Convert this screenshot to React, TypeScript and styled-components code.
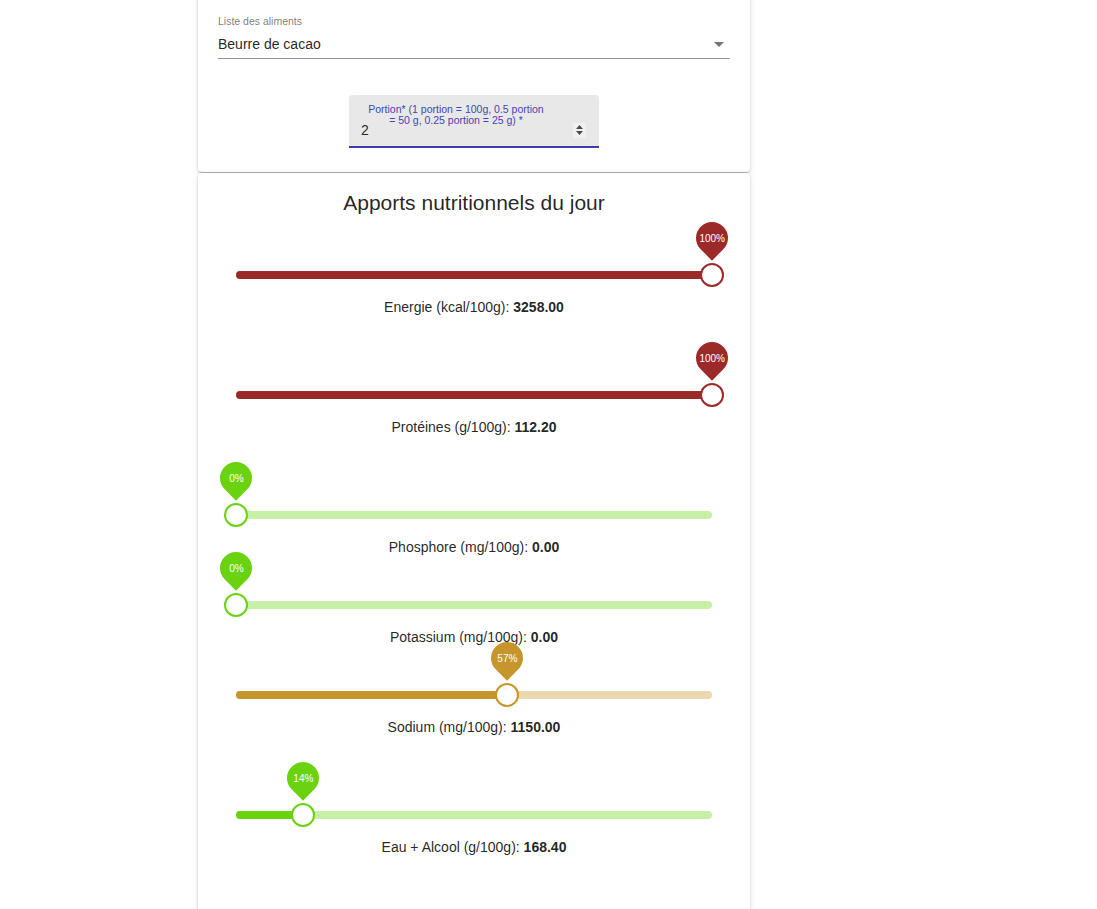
import React from 'react';
import styled, { createGlobalStyle } from 'styled-components';

const GlobalStyle = createGlobalStyle`
  body {
    margin: 0;
    background: #ffffff;
    font-family: "Liberation Sans", Arial, Helvetica, sans-serif;
    color: rgba(0, 0, 0, 0.87);
  }
`;

interface INutrient {
  label: string;
  value: string;
  percent: number;
  color: string;
  rail: string;
  space: number;
}

const RED = '#9b2a28';
const RED_RAIL = '#e1bfbe';
const GREEN = '#6ad20e';
const GREEN_RAIL = '#c7efa6';
const GOLD = '#c6952b';
const GOLD_RAIL = '#ebd8ae';

const nutrients: INutrient[] = [
  { label: 'Energie (kcal/100g)', value: '3258.00', percent: 100, color: RED, rail: RED_RAIL, space: 48 },
  { label: 'Protéines (g/100g)', value: '112.20', percent: 100, color: RED, rail: RED_RAIL, space: 68 },
  { label: 'Phosphore (mg/100g)', value: '0.00', percent: 0, color: GREEN, rail: GREEN_RAIL, space: 68 },
  { label: 'Potassium (mg/100g)', value: '0.00', percent: 0, color: GREEN, rail: GREEN_RAIL, space: 38 },
  { label: 'Sodium (mg/100g)', value: '1150.00', percent: 57, color: GOLD, rail: GOLD_RAIL, space: 38 },
  { label: 'Eau + Alcool (g/100g)', value: '168.40', percent: 14, color: GREEN, rail: GREEN_RAIL, space: 68 },
];

function PrettySlider({ percent, color, rail }: { percent: number; color: string; rail: string }) {
  return (
    <SliderBox>
      <Rail rail={rail} />
      <Track color={color} style={{ width: `${percent}%` }} />
      <Thumb color={color} style={{ left: `${percent}%` }}>
        <Drop color={color}>
          <DropText>{percent}%</DropText>
        </Drop>
      </Thumb>
    </SliderBox>
  );
}

function App() {
  return (
    <>
      <GlobalStyle />
      <Column>
        <TopCard>
          <SelectLabel>Liste des aliments</SelectLabel>
          <SelectRow>
            <span>Beurre de cacao</span>
            <svg width="10" height="5" viewBox="0 0 10 5">
              <path d="M0 0l5 5 5-5z" fill="rgba(0,0,0,0.54)" />
            </svg>
          </SelectRow>
          <PortionField>
            <PortionLabel>
              Portion* (1 portion = 100g, 0.5 portion = 50 g, 0.25 portion = 25 g) *
            </PortionLabel>
            <PortionInput>
              <span>2</span>
              <Spinner>
                <svg width="7" height="12" viewBox="0 0 7 12">
                  <path d="M0 5l3.5-4 3.5 4z" fill="#4a4a4a" />
                  <path d="M0 7l3.5 4 3.5-4z" fill="#4a4a4a" />
                </svg>
              </Spinner>
            </PortionInput>
          </PortionField>
        </TopCard>

        <NutritionCard>
          <Title>Apports nutritionnels du jour</Title>
          {nutrients.map(n => (
            <Row key={n.label} space={n.space}>
              <PrettySlider percent={n.percent} color={n.color} rail={n.rail} />
              <RowLabel>
                {n.label}: <strong>{n.value}</strong>
              </RowLabel>
            </Row>
          ))}
        </NutritionCard>
      </Column>
    </>
  );
}
export default App;

const Column = styled.main`
  width: 552px;
  margin: -6px 0 0 198px;
  display: flex;
  flex-direction: column;
  gap: 1px;
`;

const Card = styled.section`
  background: #ffffff;
  border-radius: 4px;
  box-shadow: 0px 2px 1px -1px rgba(0, 0, 0, 0.2),
    0px 1px 2px 0px rgba(0, 0, 0, 0.14), 0px 1px 6px 0px rgba(0, 0, 0, 0.12);
`;

const TopCard = styled(Card)`
  display: flex;
  flex-direction: column;
  padding: 21px 20px 24px;
`;

const SelectLabel = styled.div`
  font-size: 10.5px;
  line-height: 12px;
  color: rgba(0, 0, 0, 0.54);
`;

const SelectRow = styled.div`
  display: flex;
  justify-content: space-between;
  align-items: center;
  padding: 8px 0 5px;
  font-size: 14px;
  line-height: 18px;
  border-bottom: 1px solid rgba(0, 0, 0, 0.42);
  svg {
    margin-right: 6px;
  }
`;

const PortionField = styled.div`
  position: relative;
  align-self: center;
  width: 250px;
  margin-top: 36px;
  background: #e8e8e8;
  border-radius: 4px 4px 0 0;
  border-bottom: 2px solid #3a3fa6;
`;

const PortionLabel = styled.label`
  position: absolute;
  top: 9px;
  left: 15px;
  width: 184px;
  text-align: center;
  font-size: 10.5px;
  line-height: 10.5px;
  color: #4347b3;
`;

const PortionInput = styled.div`
  display: flex;
  justify-content: space-between;
  align-items: center;
  padding: 26px 13px 7px 12px;
  font-size: 14px;
  line-height: 18px;
  color: rgba(0, 0, 0, 0.87);
`;

const Spinner = styled.span`
  display: flex;
  align-items: center;
  justify-content: center;
  width: 13px;
  height: 15px;
  background: #f1f1f1;
`;

const NutritionCard = styled(Card)`
  padding: 18px 0 80px;
`;

const Title = styled.h2`
  margin: 0;
  text-align: center;
  font-size: 21px;
  line-height: 24px;
  font-weight: 400;
  color: rgba(0, 0, 0, 0.87);
`;

const Row = styled.div<{ space: number }>`
  padding-top: ${({ space }) => space}px;
`;

const SliderBox = styled.div`
  position: relative;
  height: 24px;
  margin: 0 38px;
`;

const Rail = styled.span<{ rail: string }>`
  position: absolute;
  left: 0;
  right: 0;
  top: 8px;
  height: 8px;
  border-radius: 4px;
  background: ${({ rail }) => rail};
`;

const Track = styled.span<{ color: string }>`
  position: absolute;
  left: 0;
  top: 8px;
  height: 8px;
  border-radius: 4px;
  background: ${({ color }) => color};
`;

const Thumb = styled.span<{ color: string }>`
  position: absolute;
  top: 0;
  width: 24px;
  height: 24px;
  margin-left: -12px;
  box-sizing: border-box;
  border: 2px solid ${({ color }) => color};
  border-radius: 50%;
  background: #ffffff;
`;

const Drop = styled.span<{ color: string }>`
  position: absolute;
  left: -6px;
  top: -43px;
  width: 32px;
  height: 32px;
  display: flex;
  align-items: center;
  justify-content: center;
  border-radius: 50% 50% 50% 0;
  background: ${({ color }) => color};
  transform: rotate(-45deg);
`;

const DropText = styled.span`
  transform: rotate(45deg);
  font-size: 10px;
  color: #ffffff;
`;

const RowLabel = styled.div`
  margin-top: 12px;
  text-align: center;
  font-size: 14px;
  line-height: 16px;
  color: rgba(0, 0, 0, 0.87);
  strong {
    font-weight: 700;
  }
`;
